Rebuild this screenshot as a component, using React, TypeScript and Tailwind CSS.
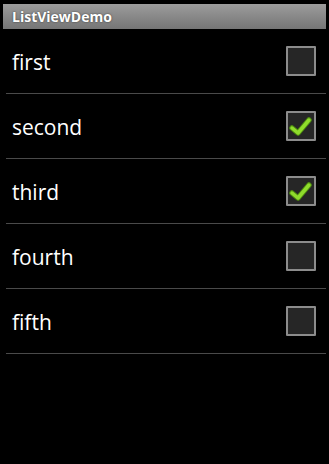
import { useState } from "react";

const ITEMS = [
  { label: "first", checked: false },
  { label: "second", checked: true },
  { label: "third", checked: true },
  { label: "fourth", checked: false },
  { label: "fifth", checked: false },
];

function CheckBox({ checked, onToggle }: { checked: boolean; onToggle: () => void }) {
  return (
    <button
      onClick={onToggle}
      className="w-[30px] h-[30px] border-2 border-[#8c8c8c] bg-[#262626] rounded-[1px] flex items-center justify-center"
    >
      {checked && (
        <svg width="26" height="26" viewBox="0 0 26 26">
          <path
            d="M4 15 L10 20 L21 7"
            fill="none"
            stroke="#4d8a10"
            strokeWidth="5.5"
            strokeLinecap="round"
            strokeLinejoin="round"
          />
          <path
            d="M4 15 L10 20 L21 7"
            fill="none"
            stroke="#8fdc2c"
            strokeWidth="3.5"
            strokeLinecap="round"
            strokeLinejoin="round"
          />
        </svg>
      )}
    </button>
  );
}

export default function App() {
  const [items, setItems] = useState(ITEMS);

  const toggle = (i: number) =>
    setItems((prev) => prev.map((it, j) => (j === i ? { ...it, checked: !it.checked } : it)));

  return (
    <div
      className="w-[329px] h-[464px] bg-black pt-[4px] px-[3px]"
      style={{ fontFamily: '"Open Sans", "Noto Sans", sans-serif' }}
    >
      <div className="h-[25px] bg-gradient-to-b from-[#9c9c9c] to-[#767676] flex items-center pl-[9px]">
        <span className="text-white font-bold text-[14px] [text-shadow:0_0_2px_rgba(0,0,0,0.6)]">
          ListViewDemo
        </span>
      </div>
      <div className="pl-[3px]">
        {items.map((it, i) => (
          <div key={it.label} className="h-[65px] border-b border-[#4a4a4a] flex items-center justify-between pl-[6px] pr-[10px]">
            <span className="text-white text-[21px] pt-[3px]">{it.label}</span>
            <CheckBox checked={it.checked} onToggle={() => toggle(i)} />
          </div>
        ))}
      </div>
    </div>
  );
}
